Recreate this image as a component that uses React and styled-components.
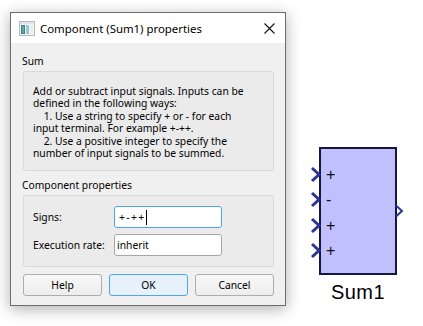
import * as React from 'react'
import styled, { createGlobalStyle } from 'styled-components'

const GlobalStyle = createGlobalStyle`
  html, body {
    margin: 0;
    padding: 0;
    background: #ffffff;
  }
  body {
    width: 423px;
    height: 326px;
    overflow: hidden;
  }
`

const Page = styled.div`
  display: flex;
  align-items: flex-start;
  width: 423px;
  height: 326px;
`

const Dialog = styled.div`
  margin: 12px 0 0 10px;
  width: 276px;
  box-sizing: border-box;
  border: 1px solid #6e6e6e;
  background: #f0f0f0;
  box-shadow: 0 3px 14px rgba(0, 0, 0, 0.32);
  font-family: 'Noto Sans', 'Open Sans', sans-serif;
  font-size: 10.3px;
  color: #000;
  display: flex;
  flex-direction: column;
`

const TitleBar = styled.div`
  height: 30px;
  background: #ffffff;
  display: flex;
  align-items: center;
  padding: 0 10px 0 8px;
  gap: 5px;
`

const TitleText = styled.span`
  flex: 1;
  font-size: 11.4px;
`

const Body = styled.div`
  display: flex;
  flex-direction: column;
  padding: 11px 11px 9px 12px;
`

const SectionLabel = styled.div`
  line-height: 14px;
  margin-left: -1px;
  margin-top: ${p => p.$top || 0}px;
  margin-bottom: 3px;
`

const Group = styled.div`
  border: 1px solid #dadada;
  border-radius: 2px;
  background: #ebebeb;
  padding: ${p => p.$pad};
`

const Description = styled.div`
  line-height: 12.4px;
  white-space: pre;
`

const FormGrid = styled.div`
  display: grid;
  grid-template-columns: 81px 108px;
  row-gap: 6px;
  align-items: center;
`

const Input = styled.div`
  height: 22px;
  box-sizing: border-box;
  background: #fff;
  border: 1px solid ${p => (p.$focus ? '#48a2ee' : '#a6a6a6')};
  border-radius: 3px;
  display: flex;
  align-items: center;
  padding-left: ${p => (p.$focus ? 4 : 2)}px;
  letter-spacing: ${p => (p.$focus ? 1.4 : 0)}px;
`

const Caret = styled.span`
  display: inline-block;
  width: 1px;
  height: 15px;
  background: #000;
`

const ButtonRow = styled.div`
  display: grid;
  grid-template-columns: repeat(3, 1fr);
  gap: 7px;
  margin-top: 7px;
`

const Button = styled.div`
  height: 22px;
  box-sizing: border-box;
  border: 1px solid ${p => (p.$primary ? '#4ca6f0' : '#adadad')};
  border-radius: 3px;
  background: ${p => (p.$primary ? '#e6f1fb' : 'linear-gradient(#f8f8f8, #ededed)')};
  display: flex;
  align-items: center;
  justify-content: center;
`

const Canvas = styled.div`
  position: relative;
  flex: 1;
  height: 100%;
`

const Node = styled.div`
  position: absolute;
  left: ${p => p.$x}px;
  top: ${p => p.$y}px;
  display: flex;
  flex-direction: column;
  align-items: center;
`

const Block = styled.div`
  position: relative;
  width: 78px;
  height: 128px;
  box-sizing: border-box;
  border: 2px solid #16163e;
  background: #c0c0ff;
  display: flex;
  flex-direction: column;
  padding: 16px 0 0 5px;
  gap: 5.3px;
  font-family: 'Liberation Sans', Arial, sans-serif;
  font-size: 16px;
  color: #111;
`

const Sign = styled.div`
  height: 20px;
  line-height: 20px;
`

const Port = styled.svg`
  position: absolute;
  left: ${p => p.$x}px;
  top: ${p => p.$y}px;
  overflow: visible;
`

const BlockName = styled.div`
  margin-top: 6px;
  font-family: 'Liberation Sans', Arial, sans-serif;
  font-size: 20px;
  color: #000;
  letter-spacing: 0.5px;
`

const WindowIcon = () => (
  <svg width="16" height="15" viewBox="0 0 16 15">
    <rect x="0.5" y="0.5" width="15" height="14" fill="#f4f4f4" stroke="#b9b9b9" />
    <rect x="1" y="1" width="14" height="2" fill="#dfe6ee" />
    <rect x="2" y="4" width="4" height="9" fill="#3f7fa0" />
    <rect x="3" y="5" width="2" height="7" fill="#5fae8c" />
    <rect x="7" y="4" width="3" height="9" fill="#9fc7d2" />
    <rect x="11" y="4" width="3" height="9" fill="#e8eef0" />
  </svg>
)

const CloseIcon = () => (
  <svg width="11" height="11" viewBox="0 0 11 11">
    <path d="M0.5 0.5 L10.5 10.5 M10.5 0.5 L0.5 10.5" stroke="#111" strokeWidth="1.1" />
  </svg>
)

const description = [
  'Add or subtract input signals. Inputs can be',
  'defined in the following ways:',
  '    1. Use a string to specify + or - for each',
  'input terminal. For example +-++.',
  '    2. Use a positive integer to specify the',
  'number of input signals to be summed.',
].join('\n')

const signs = ['+', '-', '+', '+']

export default function App() {
  return (
    <Page>
      <GlobalStyle />
      <Dialog>
        <TitleBar>
          <WindowIcon />
          <TitleText>Component (Sum1) properties</TitleText>
          <CloseIcon />
        </TitleBar>
        <Body>
          <SectionLabel>Sum</SectionLabel>
          <Group $pad="13px 8px 11px 9px">
            <Description>{description}</Description>
          </Group>
          <SectionLabel $top={7}>Component properties</SectionLabel>
          <Group $pad="10px 8px 10px 9px">
            <FormGrid>
              <span>Signs:</span>
              <Input $focus>
                +-++
                <Caret />
              </Input>
              <span>Execution rate:</span>
              <Input>inherit</Input>
            </FormGrid>
          </Group>
          <ButtonRow>
            <Button>Help</Button>
            <Button $primary>OK</Button>
            <Button>Cancel</Button>
          </ButtonRow>
        </Body>
      </Dialog>
      <Canvas>
        <Node $x={33} $y={147}>
          <Block>
            {signs.map((s, i) => (
              <Sign key={i}>{s}</Sign>
            ))}
            {signs.map((s, i) => (
              <Port key={i} $x={-10} $y={18 + i * 25.3} width="10" height="15" viewBox="0 0 10 15">
                <path d="M1 1 L8 7.5 L1 14" fill="none" stroke="#2c3590" strokeWidth="3" />
              </Port>
            ))}
            <Port $x={74} $y={56} width="8" height="12" viewBox="0 0 8 12">
              <path d="M1 0.5 L7 6 L1 11.5" fill="none" stroke="#2c3590" strokeWidth="2" />
            </Port>
          </Block>
          <BlockName>Sum1</BlockName>
        </Node>
      </Canvas>
    </Page>
  )
}
